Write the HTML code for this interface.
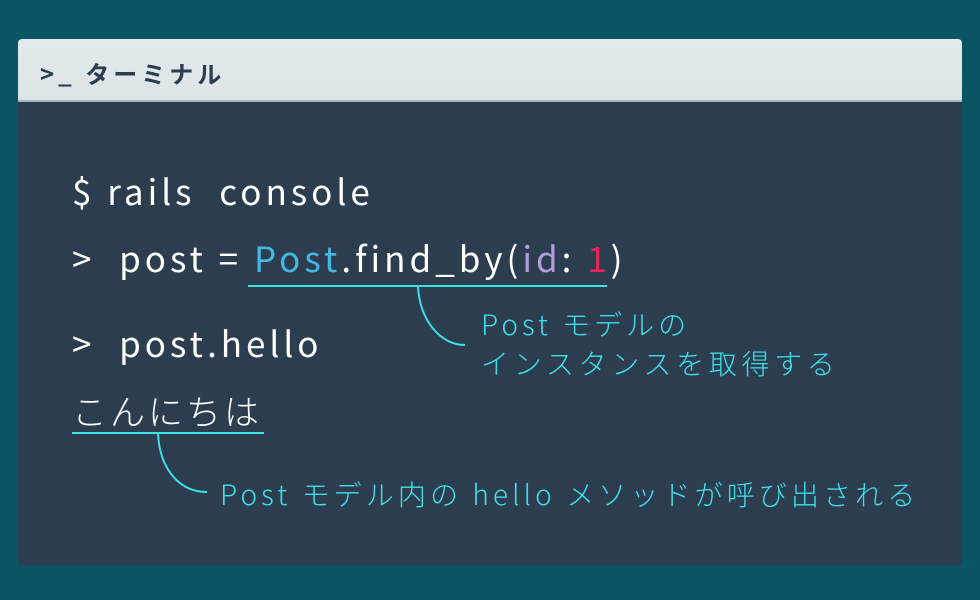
<!DOCTYPE html>
<html><head><meta charset="utf-8"><style>
body{margin:0;width:980px;height:600px;background:#0a5563;position:relative;overflow:hidden;font-family:"Liberation Sans","Noto Sans CJK JP",sans-serif}
.card{position:absolute;left:18px;top:39px;width:944px;height:526px;background:#2b3d4f;border-radius:4px;overflow:hidden}
.hd{height:63px;background:linear-gradient(#e1eaec,#dde4e8);border-bottom:2px solid #a9b9c2;box-sizing:border-box}
.hd span{position:absolute;left:22px;top:16px;font-size:24px;font-weight:bold;color:#2b3d4f;letter-spacing:4px;font-family:"Noto Sans CJK JP",sans-serif}
.t{position:absolute;white-space:nowrap;color:#fff;font-family:"Noto Sans CJK JP",sans-serif;font-weight:300}
.c{font-size:35px;letter-spacing:4px;font-weight:400}
.a{color:#3ee0e8;font-size:28px;letter-spacing:4px}
</style></head><body>
<div class="card"><div class="hd"><span>&gt;_ ターミナル</span></div></div>
<div class="t c" style="left:72px;top:165px">$ rails&nbsp; console</div>
<div class="t c" style="left:72px;top:232px">&gt;&nbsp; post = <span style="color:#44b8e0">Post</span>.find_by(<span style="color:#b39ddb">id</span>: <span style="color:#e8245a">1</span>)</div>
<div class="t c" style="left:72px;top:317px">&gt;&nbsp; post.hello</div>
<div class="t c" style="left:72px;top:385px;letter-spacing:3px;font-weight:300">こんにちは</div>
<div class="t a" style="left:481px;top:304px">Post モデルの</div>
<div class="t a" style="left:481px;top:343px;letter-spacing:4.7px">インスタンスを取得する</div>
<div class="t a" style="left:220px;top:474px;letter-spacing:4.1px">Post モデル内の hello メソッドが呼び出される</div>
<svg style="position:absolute;left:0;top:0" width="980" height="600" fill="none" stroke="#3ee0e8" stroke-width="2">
<path d="M248 286H607"/><path d="M418 287C420 320 440 345 465 345"/>
<path d="M72 433H264"/><path d="M158 434C160 470 180 492 207 492"/>
</svg>
</body></html>
